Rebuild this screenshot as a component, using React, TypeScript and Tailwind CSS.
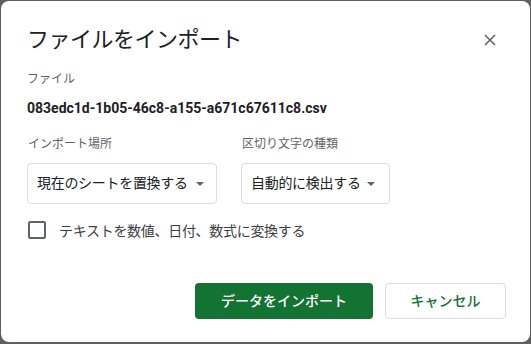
import React from "react";

function Caret() {
  return (
    <svg width="8" height="4" viewBox="0 0 8 4" className="shrink-0">
      <path d="M0 0 L8 0 L4 4 Z" fill="#5f6368" />
    </svg>
  );
}

export default function App() {
  return (
    <div
      className="w-[531px] h-[344px] bg-[#5f5f5f] pt-[1px] pl-[1px] overflow-hidden"
      style={{ fontFamily: "Roboto, 'Noto Sans CJK JP', sans-serif" }}
    >
      <div className="w-[529px] h-[341px] bg-white rounded-[8px] flex flex-col pl-[26px] pr-[24px]">
        <div className="flex items-center justify-between mt-[25px] h-[28px]">
          <div className="text-[22px] leading-[28px] text-[#202124] tracking-[-0.5px]">ファイルをインポート</div>
          <svg width="12" height="12" viewBox="0 0 12 12" className="mr-[10px]">
            <path d="M1 1 L11 11 M11 1 L1 11" stroke="#5f6368" strokeWidth="1.6" />
          </svg>
        </div>
        <div className="mt-[17px] text-[12px] leading-[16px] text-[#5f6368]">ファイル</div>
        <div className="mt-[11px] text-[14px] leading-[20px] font-bold text-[#202124]">
          083edc1d-1b05-46c8-a155-a671c67611c8.csv
        </div>
        <div className="mt-[18px] flex gap-[24px]">
          <div className="flex flex-col w-[190px]">
            <div className="text-[12px] leading-[16px] text-[#5f6368] pl-[1px]">インポート場所</div>
            <div className="mt-[11px] h-[41px] border border-[#dadce0] rounded-[4px] flex items-center justify-between pl-[9px] pr-[12px]">
              <span className="text-[14px] text-[#202124] tracking-[-0.3px]">現在のシートを置換する</span>
              <Caret />
            </div>
          </div>
          <div className="flex flex-col w-[149px]">
            <div className="text-[12px] leading-[16px] text-[#5f6368] pl-[1px]">区切り文字の種類</div>
            <div className="mt-[11px] h-[41px] border border-[#dadce0] rounded-[4px] flex items-center justify-between pl-[9px] pr-[14px]">
              <span className="text-[14px] text-[#202124] tracking-[-0.3px]">自動的に検出する</span>
              <Caret />
            </div>
          </div>
        </div>
        <div className="mt-[17px] flex items-center h-[18px]">
          <div className="w-[18px] h-[18px] border-2 border-[#5f6368] rounded-[2px] ml-[1px]" />
          <span className="ml-[13px] text-[14px] text-[#3c4043] mt-[2px] tracking-[-0.3px]">
            テキストを数値、日付、数式に変換する
          </span>
        </div>
        <div className="mt-[44px] flex justify-end gap-[12px]">
          <div className="w-[178px] h-[36px] bg-[#137333] rounded-[4px] flex items-center justify-center text-white text-[14px] font-medium">
            データをインポート
          </div>
          <div className="w-[121px] h-[36px] border border-[#dadce0] rounded-[4px] flex items-center justify-center text-[#137333] text-[14px] font-medium">
            キャンセル
          </div>
        </div>
      </div>
    </div>
  );
}
